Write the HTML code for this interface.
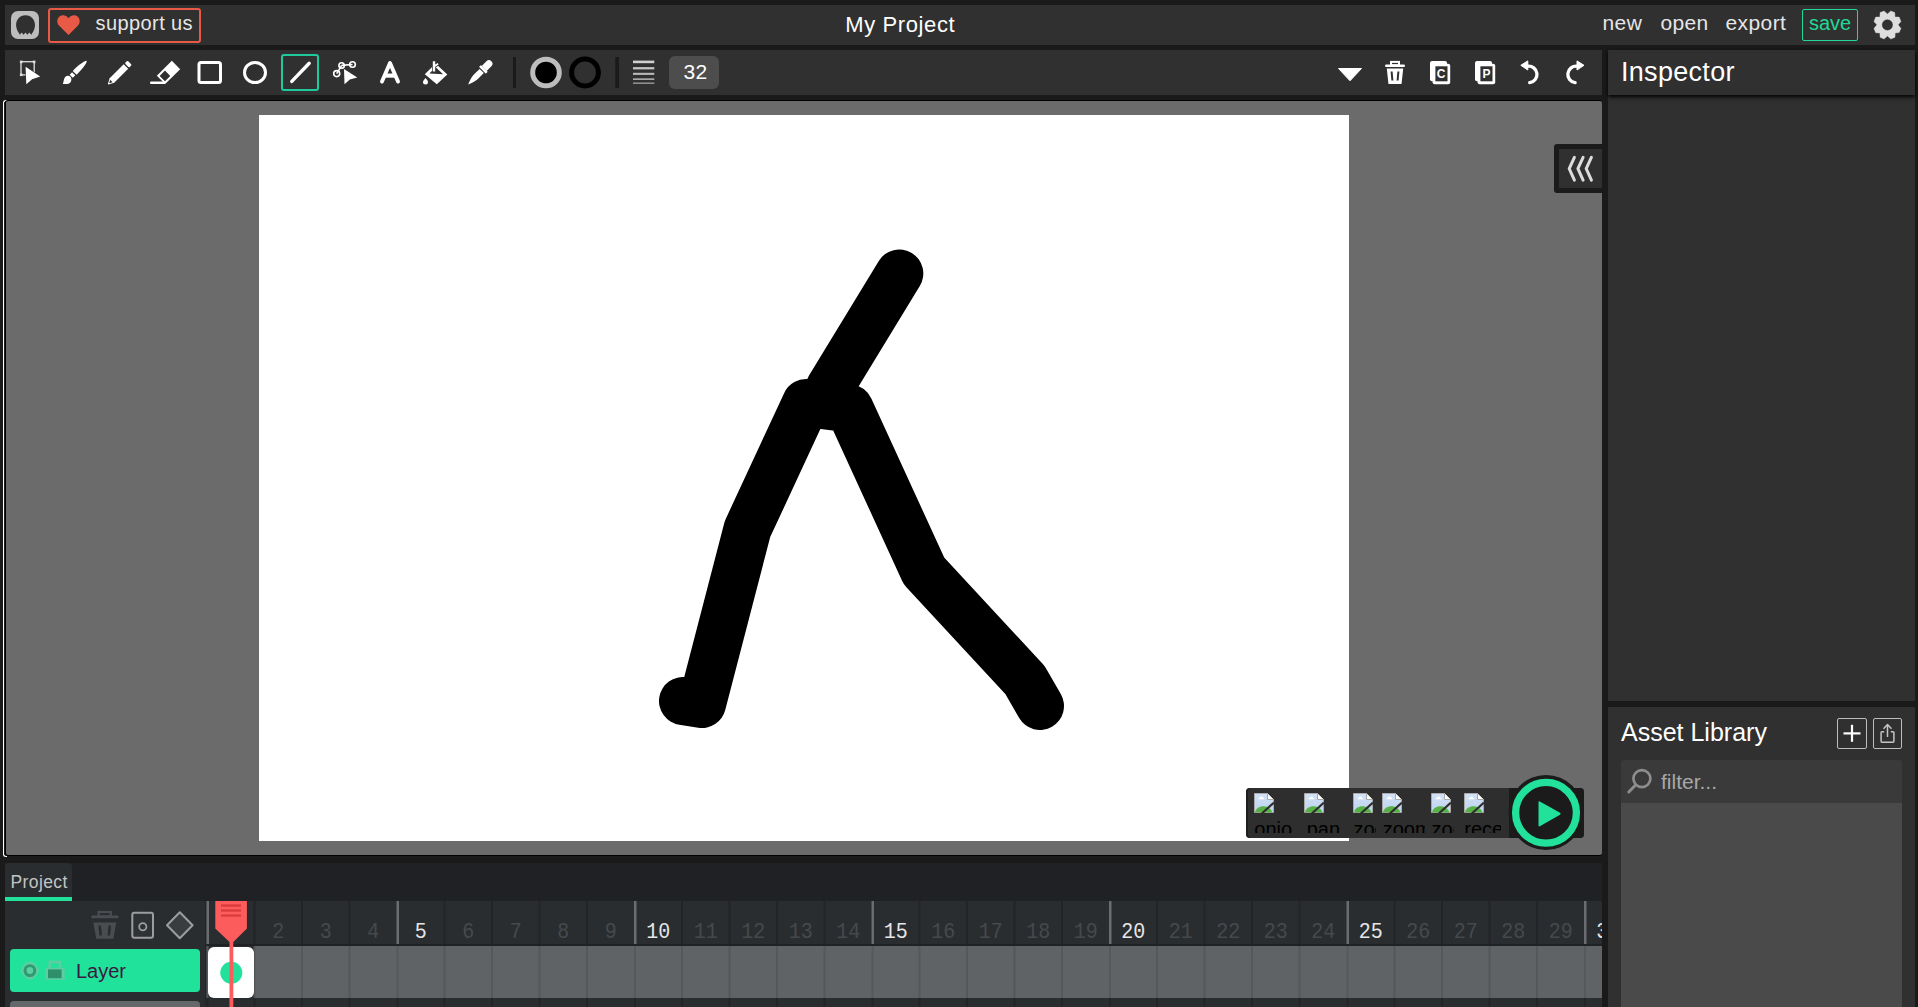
<!DOCTYPE html>
<html><head><meta charset="utf-8">
<style>
html,body{margin:0;padding:0;}
body{width:1918px;height:1007px;overflow:hidden;background:#1a1a1a;position:relative;font-family:"Liberation Sans",sans-serif;}
.a{position:absolute;}
.t{position:absolute;white-space:nowrap;line-height:1;}
</style></head><body>
<!-- menubar -->
<div class="a" style="left:5px;top:5px;width:1910px;height:40px;background:#303030"></div>
<!-- toolbar -->
<div class="a" style="left:5px;top:50px;width:1597px;height:45px;background:#303030"></div>
<!-- inspector -->
<div class="a" style="left:1608px;top:50px;width:307px;height:651px;background:#303030"></div>
<div class="a" style="left:1608px;top:50px;width:307px;height:45px;background:#303030;box-shadow:0 2px 4px rgba(0,0,0,1)"></div>
<!-- asset library -->
<div class="a" style="left:1608px;top:707px;width:307px;height:300px;background:#303030"></div>
<div class="a" style="left:1621px;top:760px;width:281px;height:43px;background:#3a3a3a;border-radius:3px 3px 0 0"></div>
<div class="a" style="left:1621px;top:803px;width:281px;height:204px;background:#4a4a4a"></div>
<!-- canvas area -->
<div class="a" style="left:2.8px;top:99.6px;width:3px;height:755.8px;border-left:1.4px solid #fff;border-top:1px solid #fff;border-bottom:1px solid #fff;border-radius:3px 0 0 3px"></div>
<div class="a" style="left:5px;top:100px;width:1597px;height:756px;background:#000;border-radius:3px"></div>
<div class="a" style="left:6px;top:101px;width:1596px;height:754px;background:#6b6b6b;border-radius:2px"></div>
<div class="a" style="left:259px;top:115px;width:1090px;height:726px;background:#fff"></div>

<!-- drawing -->
<svg class="a" style="left:0;top:0" width="1918" height="1007" viewBox="0 0 1918 1007">
<g fill="none" stroke="#000" stroke-width="48" stroke-linecap="round" stroke-linejoin="round">
<polyline points="899.3,273.5 829.5,388"/>
<polyline points="683,701 702,704 747.5,529 806,403 849.5,408.5 924,571 1025,680 1040,706"/>
</g>
</svg>

<!-- collapse button -->
<div class="a" style="left:1554px;top:144px;width:48px;height:49px;background:#1b1b1b;border-radius:3px 0 0 3px"></div>
<div class="a" style="left:1559px;top:149px;width:43px;height:39px;background:#303030"></div>
<svg class="a" style="left:1554px;top:144px" width="48" height="49" viewBox="1554 144 48 49">
<g fill="none" stroke="#dcdcdc" stroke-width="3" stroke-linecap="round" stroke-linejoin="round">
<polyline points="1574.4,157.3 1569.2,168.7 1574.4,180.1"/>
<polyline points="1583.1,157.3 1577.9,168.7 1583.1,180.1"/>
<polyline points="1591.4,157.3 1586.2,168.7 1591.4,180.1"/>
</g>
</svg>
<!-- play overlay -->
<div class="a" style="left:1246px;top:788px;width:338px;height:50px;background:#2e2e2e;border-radius:4px;box-shadow:inset 2px 0 0 #1e1e1e"></div>
<div class="a" style="left:1509px;top:788px;width:75px;height:50px;background:#1b1b1b;border-radius:0 4px 4px 0"></div>
<svg class="a" style="left:1500px;top:765px" width="100" height="95" viewBox="1500 765 100 95">
<circle cx="1546" cy="812.5" r="37.5" fill="#1b1b1b"/>
<circle cx="1546" cy="812.8" r="30.4" fill="none" stroke="#22e19b" stroke-width="7.3"/>
<path d="M1538.5 803 Q1538 800.5 1540.3 801.7 L1559.6 812.6 Q1561.6 813.8 1559.6 815 L1540.3 826 Q1538 827.2 1538.5 824.6 Z" fill="#22e19b"/>
</svg>
<!-- broken images -->
<div class="a" style="left:1253.8px;top:793px;width:39px;height:40px;overflow:hidden"><svg class="a" style="left:0;top:0" width="20" height="20" viewBox="0 0 20 20"><defs><linearGradient id="gb" x1="0" y1="0" x2="0" y2="1"><stop offset="0" stop-color="#d3e2f6"/><stop offset="1" stop-color="#bcd2ee"/></linearGradient></defs><path d="M0.5 0.5 L13.5 0.5 L19.5 6.5 L19.5 19.5 L0.5 19.5 Z" fill="url(#gb)" stroke="#a9a9a9" stroke-width="1"/><path d="M4.5 6.2 Q4.6 4.6 6 4.6 Q6.6 3.2 8 3.6 Q9.4 3.8 9.4 5.2 Q10.6 5.4 10.4 6.2 Z" fill="#fff"/><path d="M1 19.5 C2.5 11.5 15.5 11 18.5 19.5 Z" fill="#58b146"/><path d="M13.5 0.5 L13.5 6.5 L19.5 6.5" fill="#fff" stroke="#a9a9a9" stroke-width="1"/><path d="M7.8 20.5 L20 9.5" stroke="#2e2e2e" stroke-width="2.2"/></svg><div class="t" style="left:0.5px;top:25.6px;font-size:20px;color:#000">onion</div></div>
<div class="a" style="left:1303.7px;top:793px;width:44px;height:40px;overflow:hidden"><svg class="a" style="left:0;top:0" width="20" height="20" viewBox="0 0 20 20"><defs><linearGradient id="gb" x1="0" y1="0" x2="0" y2="1"><stop offset="0" stop-color="#d3e2f6"/><stop offset="1" stop-color="#bcd2ee"/></linearGradient></defs><path d="M0.5 0.5 L13.5 0.5 L19.5 6.5 L19.5 19.5 L0.5 19.5 Z" fill="url(#gb)" stroke="#a9a9a9" stroke-width="1"/><path d="M4.5 6.2 Q4.6 4.6 6 4.6 Q6.6 3.2 8 3.6 Q9.4 3.8 9.4 5.2 Q10.6 5.4 10.4 6.2 Z" fill="#fff"/><path d="M1 19.5 C2.5 11.5 15.5 11 18.5 19.5 Z" fill="#58b146"/><path d="M13.5 0.5 L13.5 6.5 L19.5 6.5" fill="#fff" stroke="#a9a9a9" stroke-width="1"/><path d="M7.8 20.5 L20 9.5" stroke="#2e2e2e" stroke-width="2.2"/></svg><div class="t" style="left:3px;top:25.6px;font-size:20px;color:#000">pan</div></div>
<div class="a" style="left:1352.9px;top:793px;width:23px;height:40px;overflow:hidden"><svg class="a" style="left:0;top:0" width="20" height="20" viewBox="0 0 20 20"><defs><linearGradient id="gb" x1="0" y1="0" x2="0" y2="1"><stop offset="0" stop-color="#d3e2f6"/><stop offset="1" stop-color="#bcd2ee"/></linearGradient></defs><path d="M0.5 0.5 L13.5 0.5 L19.5 6.5 L19.5 19.5 L0.5 19.5 Z" fill="url(#gb)" stroke="#a9a9a9" stroke-width="1"/><path d="M4.5 6.2 Q4.6 4.6 6 4.6 Q6.6 3.2 8 3.6 Q9.4 3.8 9.4 5.2 Q10.6 5.4 10.4 6.2 Z" fill="#fff"/><path d="M1 19.5 C2.5 11.5 15.5 11 18.5 19.5 Z" fill="#58b146"/><path d="M13.5 0.5 L13.5 6.5 L19.5 6.5" fill="#fff" stroke="#a9a9a9" stroke-width="1"/><path d="M7.8 20.5 L20 9.5" stroke="#2e2e2e" stroke-width="2.2"/></svg><div class="t" style="left:0.5px;top:25.6px;font-size:20px;color:#000">zoom in</div></div>
<div class="a" style="left:1382.2px;top:793px;width:43.3px;height:40px;overflow:hidden"><svg class="a" style="left:0;top:0" width="20" height="20" viewBox="0 0 20 20"><defs><linearGradient id="gb" x1="0" y1="0" x2="0" y2="1"><stop offset="0" stop-color="#d3e2f6"/><stop offset="1" stop-color="#bcd2ee"/></linearGradient></defs><path d="M0.5 0.5 L13.5 0.5 L19.5 6.5 L19.5 19.5 L0.5 19.5 Z" fill="url(#gb)" stroke="#a9a9a9" stroke-width="1"/><path d="M4.5 6.2 Q4.6 4.6 6 4.6 Q6.6 3.2 8 3.6 Q9.4 3.8 9.4 5.2 Q10.6 5.4 10.4 6.2 Z" fill="#fff"/><path d="M1 19.5 C2.5 11.5 15.5 11 18.5 19.5 Z" fill="#58b146"/><path d="M13.5 0.5 L13.5 6.5 L19.5 6.5" fill="#fff" stroke="#a9a9a9" stroke-width="1"/><path d="M7.8 20.5 L20 9.5" stroke="#2e2e2e" stroke-width="2.2"/></svg><div class="t" style="left:0.5px;top:25.6px;font-size:20px;color:#000">zoom out</div></div>
<div class="a" style="left:1431.1px;top:793px;width:23.3px;height:40px;overflow:hidden"><svg class="a" style="left:0;top:0" width="20" height="20" viewBox="0 0 20 20"><defs><linearGradient id="gb" x1="0" y1="0" x2="0" y2="1"><stop offset="0" stop-color="#d3e2f6"/><stop offset="1" stop-color="#bcd2ee"/></linearGradient></defs><path d="M0.5 0.5 L13.5 0.5 L19.5 6.5 L19.5 19.5 L0.5 19.5 Z" fill="url(#gb)" stroke="#a9a9a9" stroke-width="1"/><path d="M4.5 6.2 Q4.6 4.6 6 4.6 Q6.6 3.2 8 3.6 Q9.4 3.8 9.4 5.2 Q10.6 5.4 10.4 6.2 Z" fill="#fff"/><path d="M1 19.5 C2.5 11.5 15.5 11 18.5 19.5 Z" fill="#58b146"/><path d="M13.5 0.5 L13.5 6.5 L19.5 6.5" fill="#fff" stroke="#a9a9a9" stroke-width="1"/><path d="M7.8 20.5 L20 9.5" stroke="#2e2e2e" stroke-width="2.2"/></svg><div class="t" style="left:0.5px;top:25.6px;font-size:20px;color:#000">zoom</div></div>
<div class="a" style="left:1463.8px;top:793px;width:37.7px;height:40px;overflow:hidden"><svg class="a" style="left:0;top:0" width="20" height="20" viewBox="0 0 20 20"><defs><linearGradient id="gb" x1="0" y1="0" x2="0" y2="1"><stop offset="0" stop-color="#d3e2f6"/><stop offset="1" stop-color="#bcd2ee"/></linearGradient></defs><path d="M0.5 0.5 L13.5 0.5 L19.5 6.5 L19.5 19.5 L0.5 19.5 Z" fill="url(#gb)" stroke="#a9a9a9" stroke-width="1"/><path d="M4.5 6.2 Q4.6 4.6 6 4.6 Q6.6 3.2 8 3.6 Q9.4 3.8 9.4 5.2 Q10.6 5.4 10.4 6.2 Z" fill="#fff"/><path d="M1 19.5 C2.5 11.5 15.5 11 18.5 19.5 Z" fill="#58b146"/><path d="M13.5 0.5 L13.5 6.5 L19.5 6.5" fill="#fff" stroke="#a9a9a9" stroke-width="1"/><path d="M7.8 20.5 L20 9.5" stroke="#2e2e2e" stroke-width="2.2"/></svg><div class="t" style="left:0.5px;top:25.6px;font-size:20px;color:#000">recenter</div></div>
<!-- timeline -->
<div class="a" style="left:5px;top:862.5px;width:1597px;height:144.5px;background:#202124"></div>

<!-- menubar content -->
<div class="a" style="left:11px;top:11px;width:28px;height:28px;background:#bdbdbd;border-radius:7px"></div>
<svg class="a" style="left:11px;top:11px" width="28" height="28" viewBox="0 0 28 28"><path d="M14.5 4.2 C8.5 4.2 5.1 8.8 5.1 14 C5.1 17.5 6.6 20.5 8.2 22.5 L8.8 23.8 L10.7 21.5 L12.5 23.8 L14.6 21.5 L16.3 23.8 L18.3 21.5 L20.3 23.8 L21 22.5 C22.6 20.5 24 17.5 24 14 C24 8.8 20.5 4.2 14.5 4.2 Z" fill="#303030"/></svg>
<div class="a" style="left:48px;top:8px;width:149px;height:31px;border:2px solid #e85a45;border-radius:3px"></div>
<svg class="a" style="left:56px;top:14px" width="25" height="22" viewBox="0 0 25 22"><path d="M12.5 21 L3 11.5 C0.5 9 0.8 4.5 3.5 2.5 C6.2 0.5 9.8 1 12.5 4.2 C15.2 1 18.8 0.5 21.5 2.5 C24.2 4.5 24.5 9 22 11.5 Z" fill="#e85a45"/></svg>
<div class="t" style="left:95.6px;top:13px;font-size:20px;color:#e6e6e6;letter-spacing:0.4px">support us</div>
<div class="t" style="left:845.3px;top:14px;font-size:22px;color:#fff;letter-spacing:0.6px">My Project</div>
<div class="t" style="left:1602.5px;top:12px;font-size:21px;color:#e6e6e6;letter-spacing:0.4px">new</div>
<div class="t" style="left:1660.5px;top:12px;font-size:21px;color:#e6e6e6;letter-spacing:0.35px">open</div>
<div class="t" style="left:1725.5px;top:12px;font-size:21px;color:#e6e6e6;letter-spacing:0.4px">export</div>
<div class="a" style="left:1802px;top:9px;width:54px;height:30px;border:1px solid #20d997;border-radius:2px"></div>
<div class="t" style="left:1809px;top:13px;font-size:20px;color:#20d997">save</div>

<svg class="a" style="left:1860px;top:0" width="50" height="50" viewBox="1860 0 50 50"><path fill-rule="evenodd" d="M1887.44 13.94 L1890.81 10.96 L1894.79 12.55 L1894.98 16.91 L1899.15 17.11 L1900.94 21.48 L1898.16 24.86 L1900.94 28.43 L1899.15 32.60 L1895.18 33.00 L1894.98 37.37 L1890.81 38.96 L1887.44 35.98 L1884.06 38.96 L1880.09 37.37 L1879.89 33.00 L1875.72 32.80 L1873.94 28.43 L1876.91 24.86 L1873.94 21.48 L1875.72 17.11 L1879.89 16.91 L1880.09 12.55 L1884.06 10.96 Z M1887.4 19.3 A5.6 5.6 0 1 0 1887.4 30.5 A5.6 5.6 0 1 0 1887.4 19.3 Z" fill="#dedede" stroke="#dedede" stroke-width="0.4" stroke-linejoin="round"/></svg>
<!-- toolbar icons -->
<svg class="a" style="left:0;top:0" width="1918" height="100" viewBox="0 0 1918 100">
<g fill="#fff" stroke="none">
 <!-- select -->
 <rect x="21" y="61.7" width="13.2" height="13.2" fill="none" stroke="#dedede" stroke-width="1.3"/>
 <rect x="19.9" y="60.6" width="2.6" height="2.6" fill="#dedede"/>
 <rect x="32.8" y="60.6" width="2.6" height="2.6" fill="#dedede"/>
 <rect x="19.9" y="73.5" width="2.6" height="2.6" fill="#dedede"/>
 <path d="M25.6 66.7 L40.2 76.6 L32.1 79.2 L26.3 84.2 Z" fill="#fff" stroke="#303030" stroke-width="1" paint-order="stroke"/>
 <!-- brush -->
 <g transform="translate(75 72.5) rotate(45)">
  <path d="M0 -16.6 C1.6 -15.5 2.9 -8 2.7 0.5 L-2.7 0.5 C-2.9 -8 -1.6 -15.5 0 -16.6 Z"/>
  <rect x="-2.2" y="1.9" width="4.4" height="3.5" rx="0.4"/>
 </g>
 <path d="M62.8 83.9 C63.5 82.5 63.6 80.5 64.2 78.8 C64.9 76.9 66.3 75.8 67.9 75.8 C69.9 75.8 71.4 77.5 71.4 79.6 C71.4 82 69.5 84.1 66.8 84.1 Z"/>
 <!-- pencil -->
 <g transform="translate(120 72.4) rotate(45)">
  <rect x="-3.05" y="-13.7" width="6.1" height="3.9" rx="1"/>
  <path d="M-3.2 -8.4 L3.2 -8.4 L3.2 11.4 L0.4 16.8 L-0.4 16.8 L-3.2 11.4 Z"/>
  <path d="M-1.7 12.2 L1.7 12.2 L0 15.3 Z" fill="#303030"/>
 </g>
 <!-- eraser -->
 <g transform="translate(168.5 72.45) rotate(45)">
  <path fill-rule="evenodd" d="M-5.9 -10.6 L5.9 -10.6 L5.9 10.6 L-5.9 10.6 Z M-3.8 1.2 L3.7 1.2 L3.7 8.7 L-3.8 8.7 Z"/>
 </g>
 <path d="M151.2 81.5 L165 81.5 L165 84 L151.2 84 A1.25 1.25 0 0 1 151.2 81.5 Z"/>
 <!-- rect -->
 <rect x="199" y="62.5" width="21.5" height="20" rx="2" fill="none" stroke="#fff" stroke-width="3"/>
 <!-- ellipse -->
 <ellipse cx="255" cy="72.5" rx="10.5" ry="10.1" fill="none" stroke="#fff" stroke-width="3"/>
 <!-- line (selected) -->
 <rect x="282" y="55" width="36" height="35" rx="2" fill="none" stroke="#1ec99b" stroke-width="2"/>
 <line x1="291.8" y1="81.4" x2="309.2" y2="63.3" stroke="#fff" stroke-width="3.4" stroke-linecap="round"/>
 <!-- path tool -->
 <g fill="none" stroke="#fff" stroke-width="1.6">
  <line x1="336.7" y1="73.6" x2="341.6" y2="65.4"/>
  <line x1="341.6" y1="65.4" x2="352.5" y2="64.5"/>
  <circle cx="336.7" cy="73.6" r="3"/>
  <circle cx="341.6" cy="65.4" r="2.7"/>
  <circle cx="352.5" cy="64.5" r="2.8"/>
 </g>
 <path d="M344 69 L357.3 77.6 L349.8 79.6 L344.5 84.2 Z" fill="#fff" stroke="#303030" stroke-width="1" paint-order="stroke"/>
 <!-- text A -->
 <path d="M382 81.6 L390 63 L398 81.6" fill="none" stroke="#fff" stroke-width="3.9" stroke-linecap="round" stroke-linejoin="round"/>
 <line x1="385" y1="75.6" x2="395" y2="75.6" stroke="#fff" stroke-width="4.2"/>
 <!-- fill bucket -->
 <path fill-rule="evenodd" d="M424.8 74.3 L435.6 63.6 L447.3 74.5 L436.8 84.3 Z M429.4 73.6 L435.7 67.3 L443.1 74.3 Z"/>
 <path d="M432.8 61.2 L435.2 61.2 L435.2 64.6 L437.7 62.9 L438.6 64.6 L435.2 66.8 L435.2 71.6 L432.8 71.6 Z" stroke="#303030" stroke-width="1.4" paint-order="stroke"/>
 <path d="M425.5 78 C426.5 79.3 428 80.4 428 82 A2.5 2.5 0 0 1 423 82 C423 80.4 424.5 79.3 425.5 78 Z"/>
 <!-- eyedropper -->
 <g transform="translate(480 72.7) rotate(45)">
  <path d="M-3.5 -6 L-3.5 -12.6 A3.5 3.5 0 0 1 3.5 -12.6 L3.5 -6 Z"/>
  <rect x="-4.8" y="-6.1" width="9.6" height="2.7" rx="0.6"/>
  <path d="M-3 -2.4 L3 -2.4 L3 6 C2.7 10 1.2 13.5 0 16.8 C-1.2 13.5 -2.7 10 -3 6 Z"/>
 </g>
</g>
<!-- separators -->
<rect x="513" y="57" width="3" height="31" fill="#1a1a1a"/>
<rect x="615.3" y="57" width="3.6" height="31" fill="#1a1a1a"/>
<!-- fill color -->
<circle cx="546" cy="72.5" r="13.3" fill="#000" stroke="#bdbdbd" stroke-width="5"/>
<!-- stroke color -->
<circle cx="585" cy="72.5" r="13.4" fill="none" stroke="#000" stroke-width="5"/>
<!-- stroke width lines -->
<rect x="633" y="60.6" width="21.3" height="2.6" fill="#d0d0d0"/>
<rect x="633" y="67.1" width="21.3" height="2.3" fill="#c4c4c4"/>
<rect x="633" y="72.8" width="21.3" height="2.1" fill="#b8b8b8"/>
<rect x="633" y="78.3" width="21.3" height="1.7" fill="#a8a8a8"/>
<rect x="633" y="82.5" width="21.3" height="1.4" fill="#999"/>
<!-- right side -->
<g fill="#fff">
 <path d="M1338.5 68.5 L1361.5 68.5 L1350 80.8 Z" stroke="#fff" stroke-width="1" stroke-linejoin="round"/>
 <!-- trash -->
 <rect x="1391" y="61.9" width="8" height="3.3" fill="none" stroke="#fff" stroke-width="2"/>
 <rect x="1385" y="64.6" width="20" height="2.4" rx="1.2"/>
 <path fill-rule="evenodd" d="M1386.8 68.4 L1403.2 68.4 L1401.6 83.5 Q1401.5 84 1401 84 L1389 84 Q1388.5 84 1388.4 83.5 Z M1390.6 71.6 L1392.6 71.6 L1393.4 80.6 L1391.4 80.6 Z M1397.4 71.6 L1399.4 71.6 L1398.6 80.6 L1396.6 80.6 Z"/>
</g>
<!-- copy -->
<g fill="#fff">
 <rect x="1430" y="61" width="17" height="20.3" rx="2"/>
 <rect x="1432.6" y="63.8" width="17.6" height="20.4" rx="2"/>
 <rect x="1435.4" y="66.3" width="12.1" height="15" fill="#303030"/>
 <text x="1441.2" y="78.2" font-family="Liberation Sans" font-weight="bold" font-size="12" text-anchor="middle">C</text>
</g>
<!-- paste -->
<g fill="#fff">
 <rect x="1475" y="61" width="17" height="20.3" rx="2"/>
 <rect x="1477.6" y="63.8" width="17.6" height="20.4" rx="2"/>
 <rect x="1480.4" y="66.3" width="12.1" height="15" fill="#303030"/>
 <text x="1486.6" y="78.2" font-family="Liberation Sans" font-weight="bold" font-size="12" text-anchor="middle">P</text>
</g>
<!-- undo / redo -->
<g fill="none" stroke="#fff" stroke-width="3.3" stroke-linecap="round">
 <path d="M1527.6 66.2 A8.3 8.3 0 1 1 1529.7 82.7"/>
 <path d="M1577.2 66.2 A8.3 8.3 0 1 0 1575.1 82.7"/>
</g>
<path d="M1520.8 65.3 L1527.8 60.9 L1527.8 70 Z" fill="#fff" stroke="#fff" stroke-width="1" stroke-linejoin="round"/>
<path d="M1584 65.3 L1577 60.9 L1577 70 Z" fill="#fff" stroke="#fff" stroke-width="1" stroke-linejoin="round"/>
</svg>
<!-- stroke size box -->
<div class="a" style="left:669px;top:56px;width:50px;height:33px;background:#4d4d4d;border-radius:6px"></div>
<div class="t" style="left:683.5px;top:61px;font-size:21px;color:#fff;letter-spacing:0.3px">32</div>


<!-- timeline content -->
<div class="a" style="left:5px;top:901px;width:1597px;height:106px;background:#2a2d30"></div>
<div class="a" style="left:5px;top:863px;width:67px;height:34px;background:#2a2d30;border-radius:4px 4px 0 0"></div>
<div class="a" style="left:5px;top:897px;width:67px;height:4px;background:#22e19b"></div>
<div class="t" style="left:10.5px;top:874px;font-size:17.5px;color:#c4c4c4;letter-spacing:0.4px">Project</div>
<div class="a" style="left:205px;top:901px;width:1px;height:106px;background:#232528"></div>
<div class="a" style="left:207px;top:944px;width:1395px;height:2px;background:#1f2124"></div>
<div class="a" style="left:254px;top:946px;width:1348px;height:52px;background:#606366"></div>
<svg class="a" style="left:0;top:0" width="1602" height="1007" viewBox="0 0 1602 1007"><rect x="206.5" y="901" width="2.5" height="43" fill="#6a6d70"/><rect x="206.5" y="946" width="2" height="52" fill="#56595c"/><rect x="206.5" y="998" width="2" height="9" fill="#222427"/><rect x="253.5" y="901" width="2" height="43" fill="#222427"/><rect x="253.5" y="946" width="2" height="52" fill="#55585b"/><rect x="253.5" y="998" width="2" height="9" fill="#222427"/><rect x="301.0" y="901" width="2" height="43" fill="#222427"/><rect x="301.0" y="946" width="2" height="52" fill="#55585b"/><rect x="301.0" y="998" width="2" height="9" fill="#222427"/><rect x="348.5" y="901" width="2" height="43" fill="#222427"/><rect x="348.5" y="946" width="2" height="52" fill="#55585b"/><rect x="348.5" y="998" width="2" height="9" fill="#222427"/><rect x="396.5" y="901" width="2.5" height="43" fill="#6a6d70"/><rect x="396.5" y="946" width="2" height="52" fill="#56595c"/><rect x="396.5" y="998" width="2" height="9" fill="#222427"/><rect x="443.5" y="901" width="2" height="43" fill="#222427"/><rect x="443.5" y="946" width="2" height="52" fill="#55585b"/><rect x="443.5" y="998" width="2" height="9" fill="#222427"/><rect x="491.0" y="901" width="2" height="43" fill="#222427"/><rect x="491.0" y="946" width="2" height="52" fill="#55585b"/><rect x="491.0" y="998" width="2" height="9" fill="#222427"/><rect x="538.5" y="901" width="2" height="43" fill="#222427"/><rect x="538.5" y="946" width="2" height="52" fill="#55585b"/><rect x="538.5" y="998" width="2" height="9" fill="#222427"/><rect x="586.0" y="901" width="2" height="43" fill="#222427"/><rect x="586.0" y="946" width="2" height="52" fill="#55585b"/><rect x="586.0" y="998" width="2" height="9" fill="#222427"/><rect x="634.0" y="901" width="2.5" height="43" fill="#6a6d70"/><rect x="634.0" y="946" width="2" height="52" fill="#56595c"/><rect x="634.0" y="998" width="2" height="9" fill="#222427"/><rect x="681.0" y="901" width="2" height="43" fill="#222427"/><rect x="681.0" y="946" width="2" height="52" fill="#55585b"/><rect x="681.0" y="998" width="2" height="9" fill="#222427"/><rect x="728.5" y="901" width="2" height="43" fill="#222427"/><rect x="728.5" y="946" width="2" height="52" fill="#55585b"/><rect x="728.5" y="998" width="2" height="9" fill="#222427"/><rect x="776.0" y="901" width="2" height="43" fill="#222427"/><rect x="776.0" y="946" width="2" height="52" fill="#55585b"/><rect x="776.0" y="998" width="2" height="9" fill="#222427"/><rect x="823.5" y="901" width="2" height="43" fill="#222427"/><rect x="823.5" y="946" width="2" height="52" fill="#55585b"/><rect x="823.5" y="998" width="2" height="9" fill="#222427"/><rect x="871.5" y="901" width="2.5" height="43" fill="#6a6d70"/><rect x="871.5" y="946" width="2" height="52" fill="#56595c"/><rect x="871.5" y="998" width="2" height="9" fill="#222427"/><rect x="918.5" y="901" width="2" height="43" fill="#222427"/><rect x="918.5" y="946" width="2" height="52" fill="#55585b"/><rect x="918.5" y="998" width="2" height="9" fill="#222427"/><rect x="966.0" y="901" width="2" height="43" fill="#222427"/><rect x="966.0" y="946" width="2" height="52" fill="#55585b"/><rect x="966.0" y="998" width="2" height="9" fill="#222427"/><rect x="1013.5" y="901" width="2" height="43" fill="#222427"/><rect x="1013.5" y="946" width="2" height="52" fill="#55585b"/><rect x="1013.5" y="998" width="2" height="9" fill="#222427"/><rect x="1061.0" y="901" width="2" height="43" fill="#222427"/><rect x="1061.0" y="946" width="2" height="52" fill="#55585b"/><rect x="1061.0" y="998" width="2" height="9" fill="#222427"/><rect x="1109.0" y="901" width="2.5" height="43" fill="#6a6d70"/><rect x="1109.0" y="946" width="2" height="52" fill="#56595c"/><rect x="1109.0" y="998" width="2" height="9" fill="#222427"/><rect x="1156.0" y="901" width="2" height="43" fill="#222427"/><rect x="1156.0" y="946" width="2" height="52" fill="#55585b"/><rect x="1156.0" y="998" width="2" height="9" fill="#222427"/><rect x="1203.5" y="901" width="2" height="43" fill="#222427"/><rect x="1203.5" y="946" width="2" height="52" fill="#55585b"/><rect x="1203.5" y="998" width="2" height="9" fill="#222427"/><rect x="1251.0" y="901" width="2" height="43" fill="#222427"/><rect x="1251.0" y="946" width="2" height="52" fill="#55585b"/><rect x="1251.0" y="998" width="2" height="9" fill="#222427"/><rect x="1298.5" y="901" width="2" height="43" fill="#222427"/><rect x="1298.5" y="946" width="2" height="52" fill="#55585b"/><rect x="1298.5" y="998" width="2" height="9" fill="#222427"/><rect x="1346.5" y="901" width="2.5" height="43" fill="#6a6d70"/><rect x="1346.5" y="946" width="2" height="52" fill="#56595c"/><rect x="1346.5" y="998" width="2" height="9" fill="#222427"/><rect x="1393.5" y="901" width="2" height="43" fill="#222427"/><rect x="1393.5" y="946" width="2" height="52" fill="#55585b"/><rect x="1393.5" y="998" width="2" height="9" fill="#222427"/><rect x="1441.0" y="901" width="2" height="43" fill="#222427"/><rect x="1441.0" y="946" width="2" height="52" fill="#55585b"/><rect x="1441.0" y="998" width="2" height="9" fill="#222427"/><rect x="1488.5" y="901" width="2" height="43" fill="#222427"/><rect x="1488.5" y="946" width="2" height="52" fill="#55585b"/><rect x="1488.5" y="998" width="2" height="9" fill="#222427"/><rect x="1536.0" y="901" width="2" height="43" fill="#222427"/><rect x="1536.0" y="946" width="2" height="52" fill="#55585b"/><rect x="1536.0" y="998" width="2" height="9" fill="#222427"/><rect x="1584.0" y="901" width="2.5" height="43" fill="#6a6d70"/><rect x="1584.0" y="946" width="2" height="52" fill="#56595c"/><rect x="1584.0" y="998" width="2" height="9" fill="#222427"/><g font-family="Liberation Mono" font-size="20"><text transform="translate(230.75 938) scale(1 1.06)" text-anchor="middle" fill="#46494c">1</text><text transform="translate(278.25 938) scale(1 1.06)" text-anchor="middle" fill="#46494c">2</text><text transform="translate(325.75 938) scale(1 1.06)" text-anchor="middle" fill="#46494c">3</text><text transform="translate(373.25 938) scale(1 1.06)" text-anchor="middle" fill="#46494c">4</text><text transform="translate(420.75 938) scale(1 1.06)" text-anchor="middle" fill="#e6e6e6">5</text><text transform="translate(468.25 938) scale(1 1.06)" text-anchor="middle" fill="#46494c">6</text><text transform="translate(515.75 938) scale(1 1.06)" text-anchor="middle" fill="#46494c">7</text><text transform="translate(563.25 938) scale(1 1.06)" text-anchor="middle" fill="#46494c">8</text><text transform="translate(610.75 938) scale(1 1.06)" text-anchor="middle" fill="#46494c">9</text><text transform="translate(658.25 938) scale(1 1.06)" text-anchor="middle" fill="#e6e6e6">10</text><text transform="translate(705.75 938) scale(1 1.06)" text-anchor="middle" fill="#46494c">11</text><text transform="translate(753.25 938) scale(1 1.06)" text-anchor="middle" fill="#46494c">12</text><text transform="translate(800.75 938) scale(1 1.06)" text-anchor="middle" fill="#46494c">13</text><text transform="translate(848.25 938) scale(1 1.06)" text-anchor="middle" fill="#46494c">14</text><text transform="translate(895.75 938) scale(1 1.06)" text-anchor="middle" fill="#e6e6e6">15</text><text transform="translate(943.25 938) scale(1 1.06)" text-anchor="middle" fill="#46494c">16</text><text transform="translate(990.75 938) scale(1 1.06)" text-anchor="middle" fill="#46494c">17</text><text transform="translate(1038.25 938) scale(1 1.06)" text-anchor="middle" fill="#46494c">18</text><text transform="translate(1085.75 938) scale(1 1.06)" text-anchor="middle" fill="#46494c">19</text><text transform="translate(1133.25 938) scale(1 1.06)" text-anchor="middle" fill="#e6e6e6">20</text><text transform="translate(1180.75 938) scale(1 1.06)" text-anchor="middle" fill="#46494c">21</text><text transform="translate(1228.25 938) scale(1 1.06)" text-anchor="middle" fill="#46494c">22</text><text transform="translate(1275.75 938) scale(1 1.06)" text-anchor="middle" fill="#46494c">23</text><text transform="translate(1323.25 938) scale(1 1.06)" text-anchor="middle" fill="#46494c">24</text><text transform="translate(1370.75 938) scale(1 1.06)" text-anchor="middle" fill="#e6e6e6">25</text><text transform="translate(1418.25 938) scale(1 1.06)" text-anchor="middle" fill="#46494c">26</text><text transform="translate(1465.75 938) scale(1 1.06)" text-anchor="middle" fill="#46494c">27</text><text transform="translate(1513.25 938) scale(1 1.06)" text-anchor="middle" fill="#46494c">28</text><text transform="translate(1560.75 938) scale(1 1.06)" text-anchor="middle" fill="#46494c">29</text><text transform="translate(1608.25 938) scale(1 1.06)" text-anchor="middle" fill="#e6e6e6">30</text></g></svg>
<!-- layer controls -->
<svg class="a" style="left:0;top:895px" width="205" height="112" viewBox="0 895 205 112">
<g fill="#4a4d50">
<rect x="98.6" y="912" width="12.2" height="4.4" fill="none" stroke="#4a4d50" stroke-width="2.2"/>
<rect x="91.2" y="915.6" width="27.3" height="2.6" rx="1.2"/>
<path fill-rule="evenodd" d="M93.3 922.5 L116.2 922.5 L113.4 938.8 L96.3 938.8 Z M98.4 925.6 L101 925.6 L102 935.6 L99.4 935.6 Z M108.5 925.6 L111.1 925.6 L110.1 935.6 L107.5 935.6 Z"/>
</g>
<rect x="132.3" y="912.8" width="20.7" height="24.9" rx="2" fill="#2f3235" stroke="#9d9d9d" stroke-width="2"/>
<circle cx="142.8" cy="926.7" r="3.6" fill="none" stroke="#9d9d9d" stroke-width="1.8"/>
<path d="M179.8 912.2 L192.6 925.2 L179.8 938.2 L167 925.2 Z" fill="#3a3d40" stroke="#9d9d9d" stroke-width="2" stroke-linejoin="round"/>
</svg>
<div class="a" style="left:10px;top:949px;width:190px;height:43px;background:#21e29b;border-radius:4px"></div>
<div class="a" style="left:10px;top:1001.3px;width:190px;height:20px;background:#64686b;border-radius:4px"></div>
<svg class="a" style="left:10px;top:949px" width="70" height="43" viewBox="10 949 70 43">
<path d="M20.6 970.6 C22.5 966 25.5 961.6 29.9 961.6 C34.3 961.6 37.3 966 39.2 970.6 C37.3 975.2 34.3 979.6 29.9 979.6 C25.5 979.6 22.5 975.2 20.6 970.6 Z" fill="#5dcda3"/>
<ellipse cx="29.9" cy="970.6" rx="4.85" ry="4.85" fill="none" stroke="#2f9b70" stroke-width="3.1"/>
<ellipse cx="29.9" cy="970.6" rx="3" ry="3.3" fill="#5dcda3"/>
<rect x="49.75" y="961.95" width="10.2" height="8" fill="none" stroke="#5dcda3" stroke-width="2.7"/>
<rect x="45.3" y="967.8" width="19.4" height="12.1" fill="#5dcda3"/>
<rect x="48" y="969.4" width="13.6" height="8.8" fill="#2f8f6a"/>
</svg>
<div class="t" style="left:76px;top:961px;font-size:20px;color:#3b1842">Layer</div>
<!-- playhead & frame 1 -->
<div class="a" style="left:207.5px;top:946.6px;width:46.5px;height:51.3px;background:#fff;border-radius:6px"></div>
<svg class="a" style="left:200px;top:895px" width="60" height="112" viewBox="200 895 60 112">
<circle cx="231.3" cy="972.7" r="11" fill="#22e19b"/>
<path d="M215.3 901 L246.9 901 L246.9 928.6 L233.3 942 L233.3 1007 L229.5 1007 L229.5 942 L215.3 928.6 Z" fill="#fd5c5c"/>
<rect x="221" y="904.4" width="20" height="2.3" fill="#d93a3a"/>
<rect x="221" y="909.4" width="20" height="2.2" fill="#d93a3a"/>
<rect x="221" y="914.5" width="20" height="2.1" fill="#d93a3a"/>
</svg>
<!-- inspector/asset text -->
<div class="t" style="left:1621px;top:59px;font-size:27px;color:#fff;letter-spacing:0.3px">Inspector</div>
<div class="t" style="left:1621px;top:720px;font-size:25px;color:#fff">Asset Library</div>
<div class="a" style="left:1837px;top:718px;width:28px;height:29px;border:1px solid #bdbdbd;border-radius:2px"></div>
<div class="a" style="left:1873px;top:718px;width:27px;height:29px;border:1px solid #bdbdbd;border-radius:2px"></div>
<svg class="a" style="left:1830px;top:710px" width="80" height="45" viewBox="1830 710 80 45">
<rect x="1843.5" y="732.3" width="17" height="2.2" fill="#fff"/>
<rect x="1850.9" y="724.8" width="2.2" height="17" fill="#fff"/>
<g fill="none" stroke="#c4c4c4" stroke-width="1.5" stroke-linejoin="round">
<path d="M1884.2 731.7 L1882 731.7 Q1881.1 731.7 1881.1 732.6 L1881.1 741.3 Q1881.1 742.2 1882 742.2 L1893 742.2 Q1893.9 742.2 1893.9 741.3 L1893.9 732.6 Q1893.9 731.7 1893 731.7 L1890.8 731.7"/>
<path d="M1887.5 737 L1887.5 724.8 M1883.5 728.8 L1887.5 724.6 L1891.5 728.8"/>
</g>
</svg>
<svg class="a" style="left:1620px;top:762px" width="40" height="40" viewBox="1620 762 40 40">
<circle cx="1641.9" cy="778.6" r="8.5" fill="none" stroke="#8d8d8d" stroke-width="2.7"/>
<line x1="1635.6" y1="785" x2="1628.8" y2="792" stroke="#8d8d8d" stroke-width="3" stroke-linecap="round"/>
</svg>
<div class="t" style="left:1661px;top:771px;font-size:21px;color:#a8a8a8">filter...</div>
</body></html>
